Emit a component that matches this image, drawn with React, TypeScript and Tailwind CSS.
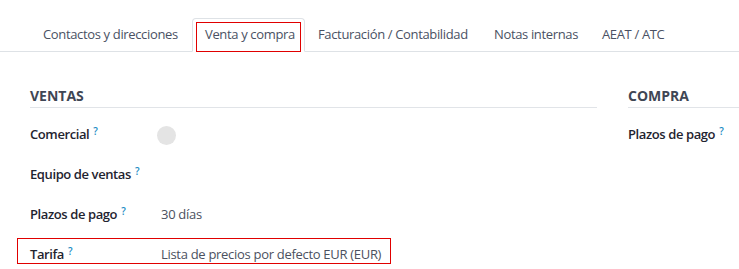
import React from "react";

const tabs = [
  { label: "Contactos y direcciones", w: "w-[162px]" },
  { label: "Venta y compra", w: "w-[113px]", active: true },
  { label: "Facturación / Contabilidad", w: "w-[176px]" },
  { label: "Notas internas", w: "w-[108px]" },
  { label: "AEAT / ATC", w: "w-[100px]" },
];

const Help = () => (
  <sup className="ml-[4px] text-[10px] font-semibold tracking-normal text-[#1b8cc4] relative -top-[4px]">?</sup>
);

const Field = ({ label, children }: { label: string; children?: React.ReactNode }) => (
  <div className="flex items-center h-10">
    <div className="w-[131px] shrink-0 font-semibold text-[#1f2430] tracking-[-0.4px]">
      {label}
      <Help />
    </div>
    <div className="text-[#4b5160] tracking-[-0.3px]">{children}</div>
  </div>
);

export default function App() {
  return (
    <div
      className="w-[739px] h-[269px] overflow-hidden bg-white text-[13px] relative"
      style={{ fontFamily: '"Open Sans", "Noto Sans", sans-serif' }}
    >
      {/* tabs */}
      <div className="flex pt-[18px] pl-[30px] border-b border-[#dee2e6]">
        {tabs.map((t) => (
          <div
            key={t.label}
            className={`${t.w} h-[34px] -mb-px flex items-center px-[12px] whitespace-nowrap text-[#4a5163] tracking-[-0.35px] ${
              t.active ? "relative border border-[#dee2e6] border-b-white rounded-t-[4px] bg-white" : "border border-transparent"
            }`}
          >
            {t.label}
            {t.active && (
              <span className="absolute left-[3px] right-[3px] top-[3px] bottom-[-1px] border border-[#e00000] pointer-events-none" />
            )}
          </div>
        ))}
      </div>

      <div className="flex gap-[31px] pl-[30px] pt-[33px]">
        <div className="w-[567px] shrink-0">
          <div className="font-bold text-[14px] text-[#3f4654] uppercase border-b border-[#e1e4e8] leading-[22px]">Ventas</div>
          <div className="pt-[7px]">
            <Field label="Comercial">
              <span className="block w-[19px] h-[19px] rounded-full bg-[#e4e4e4] -ml-[4px]" />
            </Field>
            <Field label="Equipo de ventas" />
            <Field label="Plazos de pago">30 días</Field>
            <div className="relative">
              <span className="absolute left-[-13px] w-[374px] top-[3px] h-[26px] border border-[#e00000] pointer-events-none" />
              <Field label="Tarifa">Lista de precios por defecto EUR (EUR)</Field>
            </div>
          </div>
        </div>
        <div className="flex-1">
          <div className="font-bold text-[14px] text-[#3f4654] uppercase border-b border-[#e1e4e8] leading-[22px]">Compra</div>
          <div className="pt-[7px]">
            <div className="flex items-center h-10 font-semibold text-[#1f2430] whitespace-nowrap tracking-[-0.4px]">
              Plazos de pago
              <Help />
            </div>
          </div>
        </div>
      </div>
    </div>
  );
}
